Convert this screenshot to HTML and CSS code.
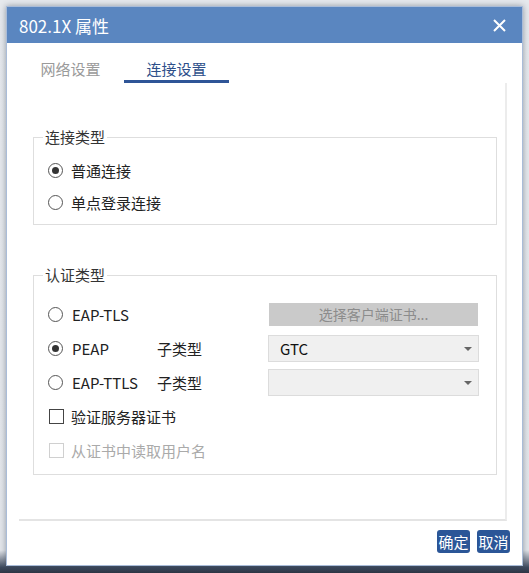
FILE: index.html
```html
<!DOCTYPE html>
<html lang="zh-CN">
<head>
    <meta charset="UTF-8">
    <meta name="viewport" content="width=device-width, initial-scale=1.0">
    <title>802.1X 属性</title>
    <link rel="stylesheet" href="styles.css">
</head>
<body>
    <div class="window">
        <div class="titlebar">
            <span class="title">802.1X 属性</span>
            <svg class="close" width="13" height="13" viewBox="0 0 13 13">
                <path d="M1 1 L12 12 M12 1 L1 12" stroke="#fff" stroke-width="2" fill="none"/>
            </svg>
        </div>

        <div class="tabs">
            <div class="tab">网络设置</div>
            <div class="tab active">连接设置</div>
        </div>

        <div class="pane">
            <fieldset class="group group-conn">
                <legend>连接类型</legend>
                <label class="row"><input type="radio" name="conn" checked> 普通连接</label>
                <label class="row"><input type="radio" name="conn"> 单点登录连接</label>
            </fieldset>

            <fieldset class="group group-auth">
                <legend>认证类型</legend>
                <div class="row">
                    <label class="method"><input type="radio" name="auth"> EAP-TLS</label>
                    <span class="sub"></span>
                    <div class="cert-btn">选择客户端证书...</div>
                </div>
                <div class="row">
                    <label class="method"><input type="radio" name="auth" checked> PEAP</label>
                    <span class="sub">子类型</span>
                    <div class="select">GTC</div>
                </div>
                <div class="row">
                    <label class="method"><input type="radio" name="auth"> EAP-TTLS</label>
                    <span class="sub">子类型</span>
                    <div class="select"></div>
                </div>
                <label class="row check"><input type="checkbox"> 验证服务器证书</label>
                <label class="row check disabled"><input type="checkbox" disabled> 从证书中读取用户名</label>
            </fieldset>
        </div>

        <div class="footer">
            <button class="btn">确定</button>
            <button class="btn">取消</button>
        </div>
    </div>
</body>
</html>
```

FILE: styles.css
```css
* {
    box-sizing: border-box;
}

body {
    margin: 0;
    padding: 6px;
    height: 573px;
    overflow: hidden;
    font-family: "Noto Sans CJK SC", "Noto Sans", sans-serif;
    background: linear-gradient(to bottom, #e6e9ed 0%, #e3e6ea 96%, #3d4a5e 99%, #2e3644 100%);
}

.window {
    width: 517px;
    height: 560px;
    background: #fff;
    border: 1px solid #a9bcd8;
    box-shadow: 0 0 6px rgba(40, 50, 70, 0.45);
    display: flex;
    flex-direction: column;
}

.titlebar {
    height: 36px;
    background: #5a86c0;
    display: flex;
    align-items: center;
    justify-content: space-between;
    padding: 0 16px 0 12px;
    flex-shrink: 0;
}

.title {
    color: #fff;
    font-size: 17px;
}

.tabs {
    height: 40px;
    display: flex;
    gap: 1px;
    padding-left: 11px;
    flex-shrink: 0;
}

.tab {
    width: 105px;
    height: 40px;
    padding-top: 16px;
    text-align: center;
    font-size: 15px;
    line-height: 20px;
    color: #9a9a9a;
    border-bottom: 3px solid transparent;
}

.tab.active {
    color: #2d4f8a;
    border-bottom-color: #2f5597;
}

.pane {
    height: 438px;
    margin: 0 15px 0 12px;
    border-right: 2px solid #ececec;
    border-bottom: 2px solid #e4e4e4;
    padding: 46px 8px 0 14px;
    flex-shrink: 0;
}

.group {
    margin: 0;
    border: 1px solid #dedede;
    padding: 0 0 0 9px;
    width: 464px;
}

.group legend {
    font-size: 15px;
    line-height: 16px;
    padding: 0 2px;
    color: #333;
}

.group-conn {
    padding-top: 12px;
    padding-bottom: 9px;
}

.group-auth {
    margin-top: 42px;
    padding-top: 18px;
    padding-bottom: 11px;
    display: flex;
    flex-direction: column;
    gap: 8px;
}

.group-conn .row + .row {
    margin-top: 6px;
}

.row {
    height: 26px;
    display: flex;
    align-items: center;
    font-size: 15px;
    color: #222;
    margin-left: 5px;
}

.row input {
    appearance: none;
    margin: 0 8px 0 0;
    width: 15px;
    height: 15px;
    border: 1px solid #555;
    background: #fff;
    flex-shrink: 0;
}

.row input[type="radio"] {
    border-radius: 50%;
    display: grid;
    place-items: center;
}

.row input[type="radio"]:checked::after {
    content: "";
    width: 7px;
    height: 7px;
    border-radius: 50%;
    background: #333;
}

.row input[type="checkbox"] {
    margin-left: 1px;
    margin-right: 7px;
    border-color: #444;
}

.check.disabled {
    color: #aaa;
}

.check.disabled input {
    border-color: #d0d0d0;
}

.method {
    width: 109px;
    display: flex;
    align-items: center;
}

.method input {
    margin-right: 9px;
}

.sub {
    width: 111px;
}

.cert-btn {
    width: 209px;
    height: 23px;
    background: #cacaca;
    color: #8c8c8c;
    text-align: center;
    font-size: 14px;
    line-height: 23px;
    margin-left: 1px;
}

.select {
    width: 211px;
    height: 27px;
    background: #f0f0f0;
    border: 1px solid #dcdcdc;
    padding-left: 11px;
    line-height: 25px;
    font-size: 15px;
    color: #111;
    position: relative;
}

.select::after {
    content: "";
    position: absolute;
    right: 6px;
    top: 11px;
    border-left: 4px solid transparent;
    border-right: 4px solid transparent;
    border-top: 4px solid #666;
}

.footer {
    display: flex;
    justify-content: flex-end;
    gap: 7px;
    padding: 9px 12px 0 0;
}

.btn {
    width: 33px;
    height: 23px;
    padding: 0;
    border: none;
    border-radius: 3px;
    background: #2b5697;
    color: #fff;
    font-family: "Noto Sans CJK SC", sans-serif;
    font-size: 15px;
    line-height: 23px;
    cursor: pointer;
}
```
